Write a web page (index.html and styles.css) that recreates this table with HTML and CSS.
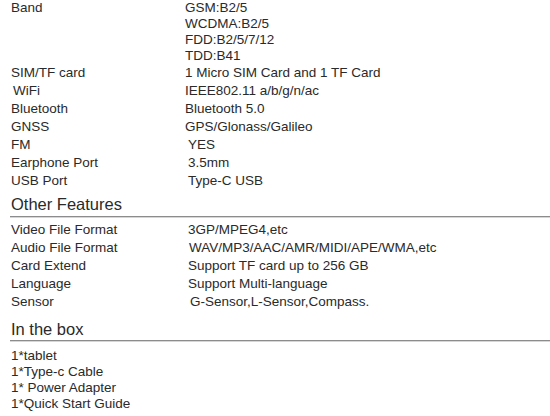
FILE: index.html
```html
<!DOCTYPE html>
<html lang="en">
<head>
<meta charset="utf-8">
<title>Specifications</title>
<link rel="stylesheet" href="styles.css">
</head>
<body>
<div class="sheet">
  <div class="spec">
    <div class="row band">
      <div class="label">Band</div>
      <div class="value">
        <div>GSM:B2/5</div>
        <div>WCDMA:B2/5</div>
        <div>FDD:B2/5/7/12</div>
        <div>TDD:B41</div>
      </div>
    </div>
    <div class="row"><div class="label">SIM/TF card</div><div class="value">1 Micro SIM Card and 1 TF Card</div></div>
    <div class="row"><div class="label nudge">WiFi</div><div class="value">IEEE802.11 a/b/g/n/ac</div></div>
    <div class="row"><div class="label">Bluetooth</div><div class="value">Bluetooth 5.0</div></div>
    <div class="row"><div class="label">GNSS</div><div class="value">GPS/Glonass/Galileo</div></div>
    <div class="row"><div class="label">FM</div><div class="value shift">YES</div></div>
    <div class="row"><div class="label">Earphone Port</div><div class="value shift">3.5mm</div></div>
    <div class="row"><div class="label">USB Port</div><div class="value shift">Type-C USB</div></div>
  </div>

  <h2 class="heading first">Other Features</h2>
  <div class="spec features">
    <div class="row"><div class="label">Video File Format</div><div class="value shift">3GP/MPEG4,etc</div></div>
    <div class="row"><div class="label">Audio File Format</div><div class="value shift more">WAV/MP3/AAC/AMR/MIDI/APE/WMA,etc</div></div>
    <div class="row"><div class="label">Card Extend</div><div class="value shift">Support TF card up to 256 GB</div></div>
    <div class="row"><div class="label">Language</div><div class="value shift">Support Multi-language</div></div>
    <div class="row"><div class="label">Sensor</div><div class="value shift most">G-Sensor,L-Sensor,Compass.</div></div>
  </div>

  <h2 class="heading second">In the box</h2>
  <ul class="box-list">
    <li>1*tablet</li>
    <li>1*Type-c Cable</li>
    <li>1* Power Adapter</li>
    <li>1*Quick Start Guide</li>
  </ul>
</div>
</body>
</html>
```

FILE: styles.css
```css
html, body {
  margin: 0;
  padding: 0;
  background: #ffffff;
}

body {
  font-family: "Liberation Sans", Arial, sans-serif;
  font-size: 13.5px;
  color: #2a2a2a;
}

.sheet {
  padding-left: 10px;
  width: 540px;
}

.spec {
  display: flex;
  flex-direction: column;
}

.row {
  display: grid;
  grid-template-columns: 174px 1fr;
  padding-left: 1px;
  line-height: 18px;
  white-space: nowrap;
}

.row.band {
  line-height: 16px;
}

.label.nudge {
  padding-left: 2px;
}

.value.shift {
  padding-left: 3px;
}

.value.more {
  padding-left: 4px;
}

.value.most {
  padding-left: 5px;
}

.heading {
  margin: 0;
  font-weight: normal;
  font-size: 16.5px;
  line-height: 20px;
  padding-left: 1px;
  padding-bottom: 2px;
  border-bottom: 1px solid #8c8c8c;
  box-shadow: 0 1px 0 #d6d6d6;
  color: #2a2a2a;
}

.heading.first {
  margin-top: 4px;
}

.features {
  padding-top: 4px;
}

.heading.second {
  margin-top: 8px;
  padding-bottom: 1px;
}

.box-list {
  list-style: none;
  margin: 0;
  padding: 7px 0 0 1px;
  line-height: 16px;
}
```
